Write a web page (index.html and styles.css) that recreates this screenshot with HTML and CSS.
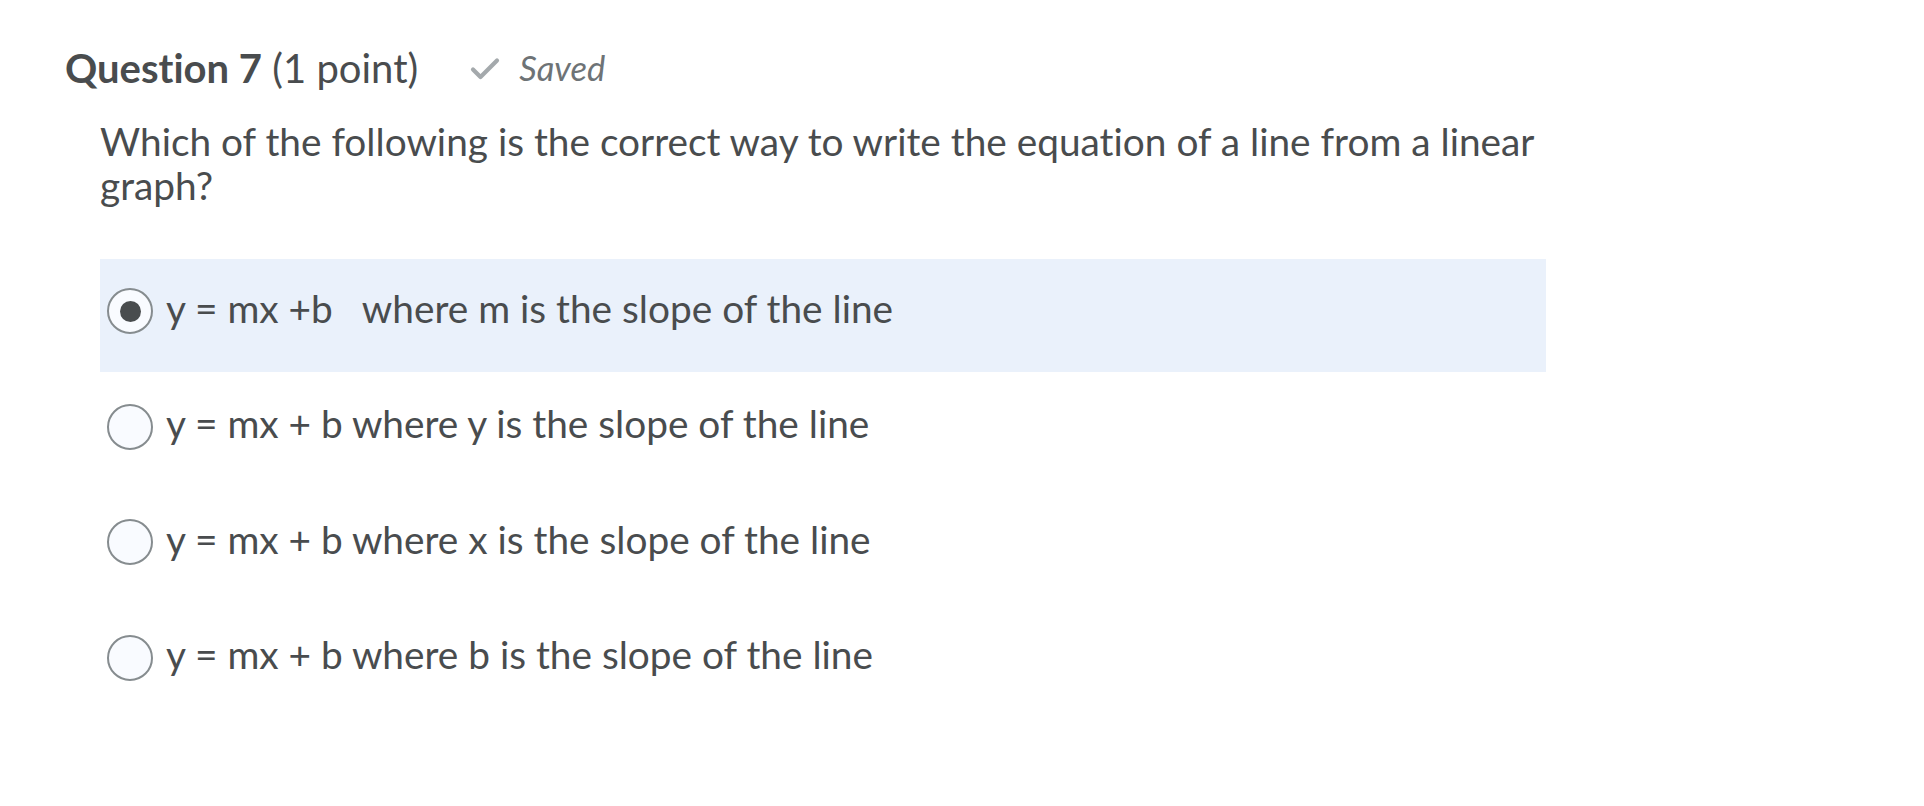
FILE: index.html
```html
<!DOCTYPE html>
<html lang="en">
<head>
<meta charset="utf-8">
<title>Question 7</title>
<link rel="stylesheet" href="styles.css">
</head>
<body>
<div class="page">
  <div class="q-header">
    <h2 class="q-title"><strong>Question 7</strong> (1 point)</h2>
    <span class="saved">
      <svg class="check" width="30" height="24" viewBox="0 0 30 24" aria-hidden="true">
        <path d="M3 12.5 L10.5 20 L27 3.5" fill="none" stroke="#a4a9ac" stroke-width="4.2" stroke-linecap="round" stroke-linejoin="round"/>
      </svg>
      <em>Saved</em>
    </span>
  </div>
  <div class="q-body">
    <p class="q-text">Which of the following is the correct way to write the equation of a line from a linear graph?</p>
    <div class="choices">
      <label class="choice selected">
        <span class="radio checked"><span class="dot"></span></span>
        <span class="choice-text">y = mx +b &nbsp; where m is the slope of the line</span>
      </label>
      <label class="choice">
        <span class="radio"></span>
        <span class="choice-text">y = mx + b where y is the slope of the line</span>
      </label>
      <label class="choice">
        <span class="radio"></span>
        <span class="choice-text">y = mx + b where x is the slope of the line</span>
      </label>
      <label class="choice">
        <span class="radio"></span>
        <span class="choice-text">y = mx + b where b is the slope of the line</span>
      </label>
    </div>
  </div>
</div>
</body>
</html>
```
FILE: styles.css
```css
html, body {
  margin: 0;
  padding: 0;
  background: #ffffff;
}
body {
  font-family: Lato, "Noto Sans", "Liberation Sans", sans-serif;
  color: #494c4e;
  font-variant-ligatures: none;
}
.page {
  padding: 45.5px 0 0 65px;
  width: 1481px;
}
.q-header {
  display: flex;
  align-items: center;
  height: 44px;
}
.q-title {
  margin: 0;
  font-size: 40px;
  line-height: 44px;
  font-weight: 400;
}
.q-title strong {
  font-weight: 700;
}
.saved {
  display: flex;
  align-items: center;
  margin-left: 52px;
  color: #6e7376;
  font-size: 34.5px;
  line-height: 44px;
}
.check {
  display: block;
  margin-right: 19px;
  margin-top: 2px;
}
.saved em {
  font-style: italic;
}
.q-body {
  padding-left: 35px;
  margin-top: 30.5px;
}
.q-text {
  margin: 0;
  font-size: 38.8px;
  line-height: 43.5px;
  max-width: 1446px;
}
.choices {
  margin-top: 52px;
  display: flex;
  flex-direction: column;
  gap: 2.5px;
}
.choice {
  display: flex;
  align-items: flex-start;
  padding: 26.5px 0 35.5px 7px;
  height: 51px;
}
.choice.selected {
  background: #eaf1fb;
}
.radio {
  box-sizing: border-box;
  width: 46px;
  height: 46px;
  margin-top: 2.5px;
  border: 2px solid #868c8f;
  border-radius: 50%;
  background: #f9fbff;
  display: flex;
  align-items: center;
  justify-content: center;
  flex: none;
}
.radio .dot {
  width: 21px;
  height: 21px;
  border-radius: 50%;
  background: #494c4e;
}
.choice-text {
  margin-left: 13px;
  font-size: 38.8px;
  line-height: 44px;
}
```
